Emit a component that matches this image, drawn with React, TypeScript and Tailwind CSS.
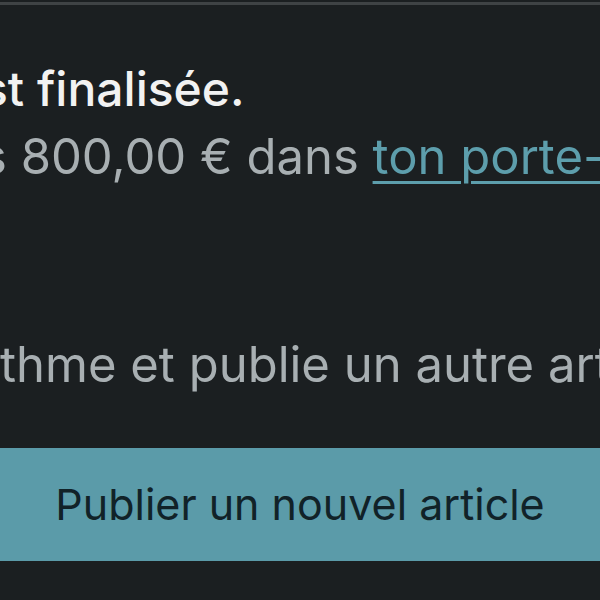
export default function App() {
  return (
    <div className="h-[600px] w-[600px] overflow-hidden bg-[#1b1f21] font-['Inter',sans-serif]">
      <div className="mt-[2px] h-[3px] w-full bg-[#3f4345]" />
      <div className="whitespace-nowrap">
        <h1 className="-ml-[18px] mt-[56px] text-[48px] font-medium leading-[56px] text-[#f2f2f2]">
          st finalisée.
        </h1>
        <p className="-ml-[19px] mt-[12px] text-[49px] leading-[56px] text-[#a8afb2]">
          s 800,00 € dans{" "}
          <a href="#" className="text-[#5d9eac] underline decoration-[3px] underline-offset-[7px]">
            ton porte-monnaie
          </a>
        </p>
        <p className="mt-[152px] text-[49px] leading-[56px] text-[#a8afb2]">
          thme et publie un autre article
        </p>
      </div>
      <button className="mt-[55px] flex h-[113px] w-full items-center justify-center bg-[#5b9ba9] text-[43px] text-[#112228]">
        Publier un nouvel article
      </button>
    </div>
  )
}
